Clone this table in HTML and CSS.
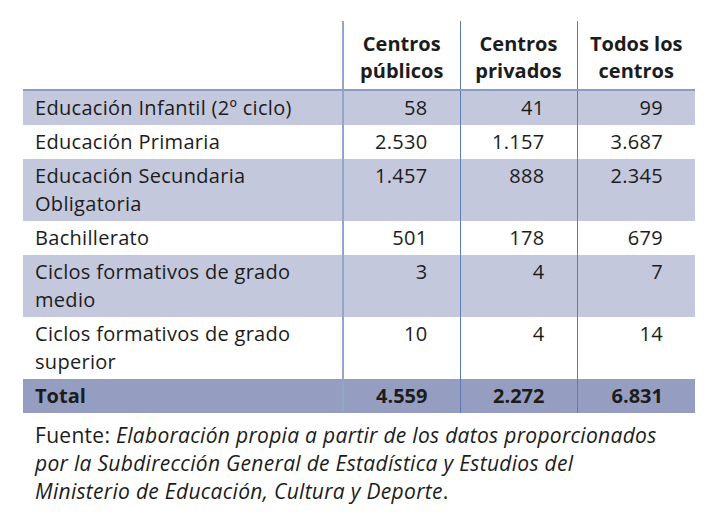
FILE: index.html
```html
<!DOCTYPE html>
<html lang="es">
<head>
<meta charset="utf-8">
<link rel="stylesheet" href="styles.css">
</head>
<body>
<div class="wrap">
<table class="data">
  <colgroup>
    <col class="w-label">
    <col class="w-num">
    <col class="w-num">
    <col class="w-last">
  </colgroup>
  <thead>
    <tr>
      <th class="label"></th>
      <th class="c1">Centros<br>públicos</th>
      <th>Centros<br>privados</th>
      <th class="last">Todos los<br>centros</th>
    </tr>
  </thead>
  <tbody>
    <tr class="shade"><td class="label">Educación Infantil (2º ciclo)</td><td class="c1">58</td><td>41</td><td class="last">99</td></tr>
    <tr><td class="label">Educación Primaria</td><td class="c1">2.530</td><td>1.157</td><td class="last">3.687</td></tr>
    <tr class="shade"><td class="label">Educación Secundaria<br>Obligatoria</td><td class="c1">1.457</td><td>888</td><td class="last">2.345</td></tr>
    <tr><td class="label">Bachillerato</td><td class="c1">501</td><td>178</td><td class="last">679</td></tr>
    <tr class="shade"><td class="label">Ciclos formativos de grado<br>medio</td><td class="c1">3</td><td>4</td><td class="last">7</td></tr>
    <tr><td class="label">Ciclos formativos de grado<br>superior</td><td class="c1">10</td><td>4</td><td class="last">14</td></tr>
    <tr class="total"><td class="label">Total</td><td class="c1">4.559</td><td>2.272</td><td class="last">6.831</td></tr>
  </tbody>
</table>
<p class="source">Fuente: <em>Elaboración propia a partir de los datos proporcionados<br>por la Subdirección General de Estadística y Estudios del<br>Ministerio de Educación, Cultura y Deporte</em>.</p>
</div>
</body>
</html>
```
FILE: styles.css
```css
html, body {
  margin: 0;
  padding: 0;
  background: #ffffff;
}
body {
  font-family: "Open Sans", "Liberation Sans", sans-serif;
  color: #1c1c1c;
}
.wrap {
  padding: 21px 0 0 23px;
  width: 672px;
}
.data {
  border-collapse: collapse;
  width: 672px;
  table-layout: fixed;
  font-size: 20px;
  line-height: 28px;
  letter-spacing: 0.3px;
}
.w-label { width: 320px; }
.w-num { width: 117px; }
.w-last { width: 118px; }
.data th, .data td {
  padding: 3px 32px 3px 12px;
  vertical-align: top;
  text-align: right;
  border-left: 1px solid #5b7bb4;
  white-space: nowrap;
}
.data th.label, .data td.label {
  text-align: left;
  border-left: none;
}
.data .c1 {
  border-left: 2px solid #93a5c8;
}
.data thead th {
  font-weight: 700;
  text-align: center;
  letter-spacing: 0;
  padding: 9px 0 5px 0;
  line-height: 27px;
  border-bottom: 2px solid #8c9dc4;
}
.data tr.shade td {
  background: #c3c8dc;
}
.data tr.total td {
  background: #959ec1;
  font-weight: 700;
  letter-spacing: 0;
}
.source {
  margin: 8px 0 0 0;
  padding-left: 12px;
  font-size: 21px;
  line-height: 28px;
  letter-spacing: 0.3px;
  white-space: nowrap;
}
```
